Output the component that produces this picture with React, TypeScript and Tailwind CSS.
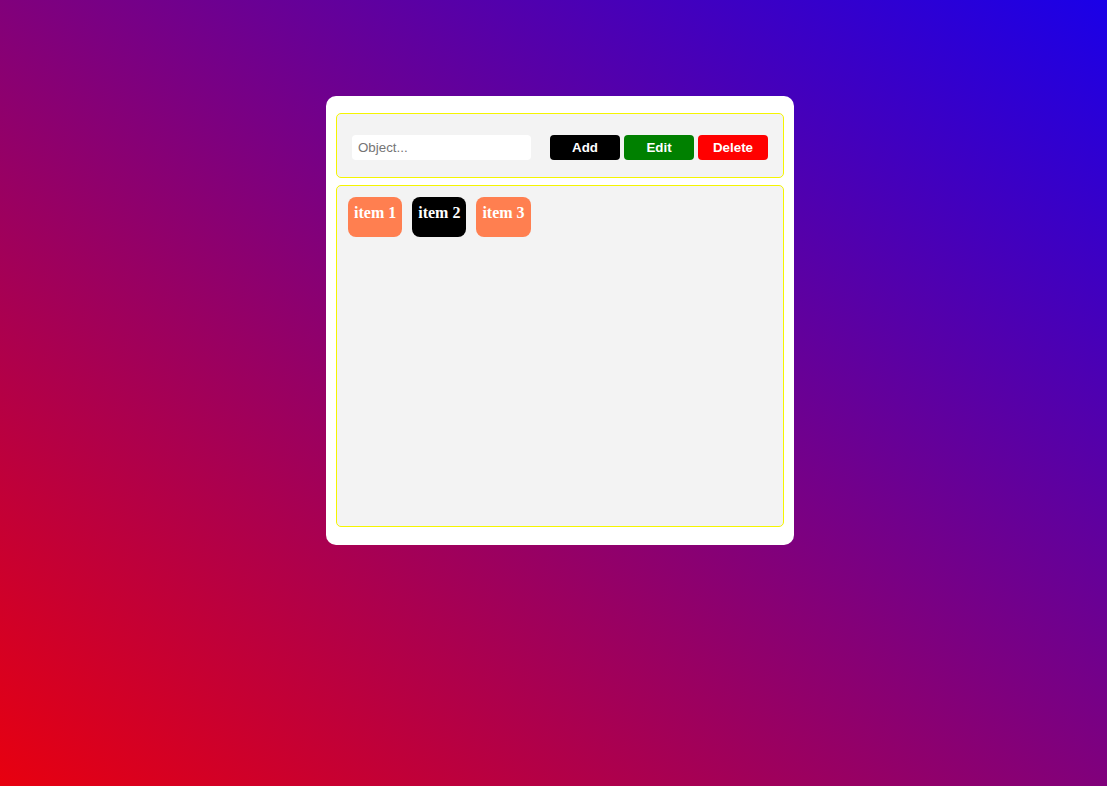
import React from "react";

const items = [
  { label: "item 1", active: false },
  { label: "item 2", active: true },
  { label: "item 3", active: false },
];

export default function App() {
  return (
    <div className="min-h-[786px] w-full bg-[linear-gradient(to_top_right,#e8000f,#1a00e8)] pt-[96px] font-['Liberation_Sans',Arial,sans-serif]">
      <div className="ml-[326px] w-[468px] rounded-[10px] bg-white px-[10px] pb-[18px] pt-[17px]">
        <div className="flex items-center rounded-[5px] border border-[#f5f500] bg-[#f3f3f3] pb-[17px] pl-[15px] pr-[15px] pt-[21px]">
          <input
            placeholder="Object..."
            className="h-[25px] w-[179px] rounded-[4px] bg-white px-[6px] text-[13.33px] text-black outline-none placeholder:text-[#757575]"
          />
          <div className="ml-[19px] flex gap-[4px]">
            <button className="h-[25px] w-[70px] rounded-[4px] bg-black text-[13.33px] font-bold text-white">Add</button>
            <button className="h-[25px] w-[70px] rounded-[4px] bg-[#008000] text-[13.33px] font-bold text-white">Edit</button>
            <button className="h-[25px] w-[70px] rounded-[4px] bg-[#ff0000] text-[13.33px] font-bold text-white">Delete</button>
          </div>
        </div>
        <div className="mt-[7px] h-[342px] rounded-[5px] border border-[#f5f500] bg-[#f3f3f3] p-[11px]">
          <div className="flex gap-[10px]">
            {items.map((it) => (
              <div
                key={it.label}
                className={`h-[40px] rounded-[8px] px-[6px] pt-[4px] font-['Liberation_Serif','Times_New_Roman',serif] text-[16px] font-bold text-white ${
                  it.active ? "bg-black" : "bg-[#ff7f50]"
                }`}
              >
                {it.label}
              </div>
            ))}
          </div>
        </div>
      </div>
    </div>
  );
}
